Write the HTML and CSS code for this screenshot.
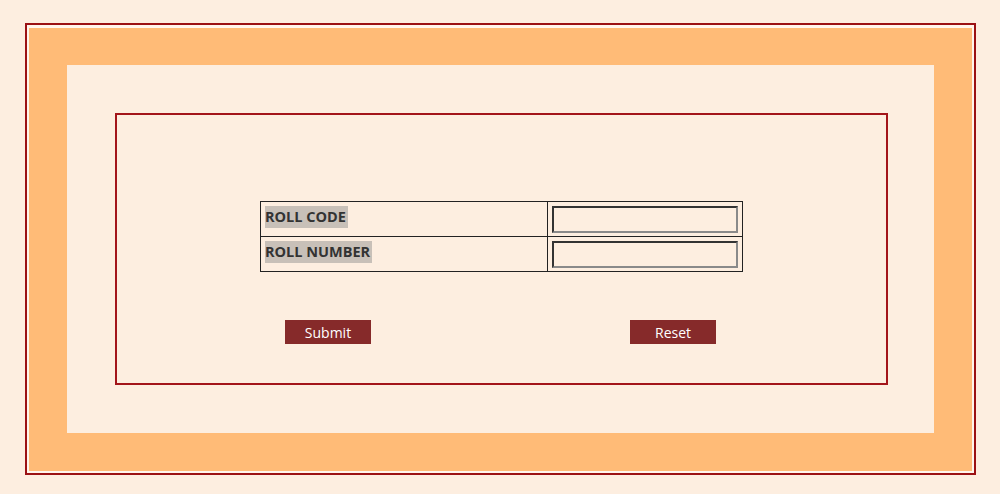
FILE: index.html
```html
<!DOCTYPE html>
<html lang="en">
  <head>
    <meta charset="utf-8" />
    <meta name="viewport" content="width=device-width, initial-scale=1" />
    <title>Result login</title>
    <link rel="stylesheet" href="styles.css">
  </head>
  <body>
    <div class="frame">
      <div class="band">
        <div class="inner">
          <form class="box">
            <table class="fields">
              <tr>
                <td class="label-cell"><span class="label">ROLL CODE </span></td>
                <td class="input-cell"><input class="field" type="text" name="rollcode" /></td>
              </tr>
              <tr>
                <td class="label-cell"><span class="label">ROLL NUMBER</span></td>
                <td class="input-cell"><input class="field" type="text" name="rollno" /></td>
              </tr>
            </table>
            <div class="actions">
              <button class="btn" type="submit">Submit</button>
              <button class="btn" type="reset">Reset</button>
            </div>
          </form>
        </div>
      </div>
    </div>
  </body>
</html>
```
FILE: styles.css
```css
body {
  margin: 0;
  padding: 23px 24px 0 25px;
  background-color: #fdeee0;
  font-family: "Open Sans", "Noto Sans", sans-serif;
}

.frame {
  border: 2px solid #9b1114;
  padding: 3px 2px 2px 2px;
  background-color: #fff5ec;
}

.band {
  background-color: #ffbb77;
  padding: 37px 38px 38px 38px;
}

.inner {
  background-color: #fdeee0;
  padding: 48px 46px 48px 48px;
}

.box {
  border: 2px solid #a3151a;
  height: 182px;
  padding-top: 86px;
  margin: 0;
}

.fields {
  width: 483px;
  margin: 0 auto;
  border-collapse: collapse;
  border: 1px solid #222;
}

.fields td {
  border: 1px solid #222;
  padding: 0;
}

.label-cell {
  width: 281px;
  height: 30px;
  vertical-align: top;
  padding: 4px 4px 0 4px !important;
}

.label {
  display: inline-block;
  vertical-align: top;
  background-color: #c8c0b8;
  color: #333;
  font-size: 14.5px;
  font-weight: bold;
  line-height: 22px;
  padding-right: 2px;
}

.input-cell {
  padding: 0 4px !important;
}

.field {
  display: block;
  width: 186px;
  height: 27px;
  box-sizing: border-box;
  margin: 0;
  background-color: transparent;
  border-style: solid;
  border-width: 2px;
  border-color: #333 #8a8a8a #8a8a8a #333;
}

.actions {
  display: flex;
  gap: 259px;
  padding-left: 168px;
  margin-top: 48px;
}

.btn {
  width: 86px;
  height: 24px;
  border: none;
  border-radius: 0;
  background-color: #862a2a;
  color: #fff;
  font-family: "Open Sans", "Noto Sans", sans-serif;
  font-size: 14px;
  padding: 0;
}
```
